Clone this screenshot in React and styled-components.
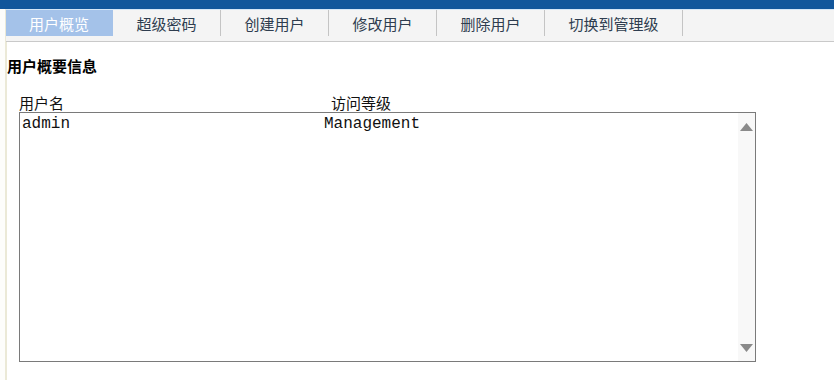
import React from "react";
import styled, { createGlobalStyle } from "styled-components";

const CJK = `"Noto Sans CJK SC", "Noto Sans", sans-serif`;

const GlobalStyle = createGlobalStyle`
  html, body {
    margin: 0;
    padding: 0;
    background: #fff;
    font-family: ${CJK};
  }
`;

const TABS = ["用户概览", "超级密码", "创建用户", "修改用户", "删除用户", "切换到管理级"];

const USERS = [{ name: "admin", level: "Management" }];

const Page = styled.div`
  width: 834px;
  height: 380px;
  overflow: hidden;
`;

const TopBar = styled.div`
  height: 9px;
  background: #11569b;
`;

const Body = styled.div`
  display: flex;
  height: 371px;
`;

const Gutter = styled.div`
  width: 5px;
  flex: none;
  background: #fdfdfb;
`;

const Frame = styled.div`
  flex: 1;
  border-left: 2px solid #ebe9d7;
  display: flex;
  flex-direction: column;
`;

const TabBar = styled.div`
  display: flex;
  height: 31px;
  background: #f4f4f4;
  border-top: 1px solid #d3e5f6;
  border-bottom: 1px solid #c9c9c9;
  margin-left: -1px;
`;

const Tab = styled.div`
  width: ${p => p.width}px;
  height: 26px;
  display: flex;
  align-items: center;
  justify-content: center;
  font-size: 15px;
  color: ${p => (p.active ? "#ffffff" : "#2e3d4f")};
  background: ${p => (p.active ? "#a4c2e9" : "transparent")};
  border-right: 1px solid ${p => (p.active ? "transparent" : "#c4c4c4")};
  box-sizing: border-box;
`;

const Content = styled.div`
  padding: 14px 0 0 0;
`;

const Heading = styled.div`
  font-size: 15px;
  font-weight: bold;
  color: #000;
  line-height: 19px;
  height: 19px;
`;

const ColHeads = styled.div`
  display: grid;
  grid-template-columns: 312px 1fr;
  margin: 19px 0 0 12px;
  font-size: 15px;
  line-height: 18px;
  color: #111;
`;

const ListBox = styled.div`
  margin-left: 12px;
  width: 737px;
  height: 250px;
  box-sizing: border-box;
  border: 1px solid #7a7a7a;
  display: flex;
`;

const Rows = styled.div`
  flex: 1;
  padding: 2px 0 0 2px;
`;

const Row = styled.div`
  display: grid;
  grid-template-columns: 302px 1fr;
  font-family: "Liberation Mono", "Courier New", monospace;
  font-size: 16px;
  line-height: 18px;
  color: #111;
`;

const ScrollTrack = styled.div`
  width: 17px;
  background: #f8f8f8;
  display: flex;
  flex-direction: column;
  justify-content: space-between;
  align-items: center;
  padding: 10px 0 9px;
  box-sizing: border-box;
`;

const Arrow = ({ down }) => (
  <svg width="13" height="8" viewBox="0 0 13 8">
    <path
      d={down ? "M0 0 H13 L6.5 8 Z" : "M6.5 0 L13 8 H0 Z"}
      fill="#8a8a8a"
    />
  </svg>
);

export default function App() {
  return (
    <Page>
      <GlobalStyle />
      <TopBar />
      <Body>
        <Gutter />
        <Frame>
          <TabBar>
            {TABS.map((t, i) => (
              <Tab key={t} active={i === 0} width={i === 0 ? 107 : i === 5 ? 138 : 108}>
                {t}
              </Tab>
            ))}
          </TabBar>
          <Content>
            <Heading>用户概要信息</Heading>
            <ColHeads>
              <span>用户名</span>
              <span>访问等级</span>
            </ColHeads>
            <ListBox>
              <Rows>
                {USERS.map(u => (
                  <Row key={u.name}>
                    <span>{u.name}</span>
                    <span>{u.level}</span>
                  </Row>
                ))}
              </Rows>
              <ScrollTrack>
                <Arrow />
                <Arrow down />
              </ScrollTrack>
            </ListBox>
          </Content>
        </Frame>
      </Body>
    </Page>
  );
}
